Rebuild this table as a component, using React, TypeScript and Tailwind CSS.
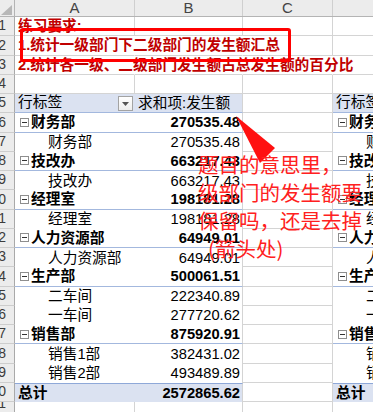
import React from "react";

type Kind = "head" | "dept" | "child" | "total";
type PRow = { kind: Kind; label: string; value: string };

const pivot: PRow[] = [
  { kind: "head", label: "行标签", value: "求和项:发生额" },
  { kind: "dept", label: "财务部", value: "270535.48" },
  { kind: "child", label: "财务部", value: "270535.48" },
  { kind: "dept", label: "技改办", value: "663217.43" },
  { kind: "child", label: "技改办", value: "663217.43" },
  { kind: "dept", label: "经理室", value: "198181.28" },
  { kind: "child", label: "经理室", value: "198181.28" },
  { kind: "dept", label: "人力资源部", value: "64949.01" },
  { kind: "child", label: "人力资源部", value: "64949.01" },
  { kind: "dept", label: "生产部", value: "500061.51" },
  { kind: "child", label: "二车间", value: "222340.89" },
  { kind: "child", label: "一车间", value: "277720.62" },
  { kind: "dept", label: "销售部", value: "875920.91" },
  { kind: "child", label: "销售1部", value: "382431.02" },
  { kind: "child", label: "销售2部", value: "493489.89" },
  { kind: "total", label: "总计", value: "2572865.62" },
];

const font = "font-['Liberation_Sans','Noto_Sans_CJK_SC',sans-serif]";

function RowNum({ n }: { n: number | string }) {
  return (
    <div className="flex w-[15px] shrink-0 items-end justify-end overflow-hidden border-r border-b border-r-[#a9a9a9] border-b-[#cdcdcd] bg-[#ececec] pr-[8px] pb-[1px] text-[14px] leading-[17px] text-[#3c3c3c]">
      {n}
    </div>
  );
}

function Collapse() {
  return (
    <span className="relative mr-[2px] inline-block h-[9px] w-[9px] shrink-0 border border-[#8e8e8e] bg-white">
      <span className="absolute top-[3px] left-[1px] h-px w-[5px] bg-[#333]" />
    </span>
  );
}

function Dropdown() {
  return (
    <span className="flex h-[15px] w-[15px] shrink-0 items-center justify-center border border-[#a3a3a3] bg-gradient-to-b from-white to-[#eeeeee]">
      <svg width="7" height="4" viewBox="0 0 7 4">
        <path d="M0 0h7L3.5 4z" fill="#555" />
      </svg>
    </span>
  );
}

function lineCls(kind: Kind) {
  if (kind === "head") return "bg-[#dbe2f1] border-b border-[#a3b8de]";
  if (kind === "dept") return "border-b border-[#a3b8de]";
  if (kind === "total") return "bg-[#dbe2f1] border-t border-[#8ea8d8]";
  return "";
}

function Label({ r }: { r: PRow }) {
  if (r.kind === "head")
    return (
      <div className="flex h-full items-end justify-between pr-[2px] pb-[1px] pl-[3px] whitespace-nowrap">
        <span className="shrink-0 leading-[18px]">{r.label}</span>
        <Dropdown />
      </div>
    );
  if (r.kind === "dept")
    return (
      <div className="flex h-full items-center pl-[5px] font-bold whitespace-nowrap">
        <Collapse />
        <span>{r.label}</span>
      </div>
    );
  if (r.kind === "total")
    return <div className="flex h-full items-center pl-[3px] font-bold">{r.label}</div>;
  return <div className="flex h-full items-center pl-[33px] whitespace-nowrap">{r.label}</div>;
}

function PivotRow({ r, n }: { r: PRow; n: number }) {
  return (
    <div className="flex h-[19.25px]">
      <RowNum n={n} />
      <div className={`w-[120px] shrink-0 ${lineCls(r.kind)}`}>
        <Label r={r} />
      </div>
      <div
        className={`flex w-[108px] shrink-0 items-center border-r border-r-[#d4d4d4] pr-[2px] ${
          r.kind === "head" ? "justify-start pl-[3px]" : "justify-end"
        } ${r.kind === "dept" || r.kind === "total" ? "font-bold" : ""} ${lineCls(r.kind)}`}
      >
        {r.value}
      </div>
      <div className="w-[90px] shrink-0 border-r border-b border-[#d4d4d4]" />
      <div className={`w-[120px] shrink-0 overflow-hidden ${lineCls(r.kind)}`}>
        <Label r={r} />
      </div>
    </div>
  );
}

function PlainRow({
  n,
  text,
  hide = [],
}: {
  n: number;
  text?: string;
  hide?: string[];
}) {
  const v = (c: string) => (hide.includes(c) ? "border-r-transparent" : "border-r-[#d4d4d4]");
  return (
    <div className="flex h-[19.25px]">
      <RowNum n={n} />
      <div className={`relative w-[120px] shrink-0 border-r border-b border-b-[#d4d4d4] ${v("a")}`}>
        {text && (
          <span className="absolute top-0 left-[3px] leading-[19px] font-bold whitespace-nowrap text-[#c00000]">
            {text}
          </span>
        )}
      </div>
      <div className={`w-[108px] shrink-0 border-r border-b border-b-[#d4d4d4] ${v("b")}`} />
      <div className={`w-[90px] shrink-0 border-r border-b border-b-[#d4d4d4] ${v("c")}`} />
      <div className="w-[120px] shrink-0 border-b border-[#d4d4d4]" />
    </div>
  );
}

export default function App() {
  return (
    <div className={`relative h-[412px] w-[373px] overflow-hidden bg-white text-[14.7px] text-black ${font}`}>
      {/* column headers */}
      <div className="flex h-[17px] border-b border-[#b4b4b4] bg-[#ececec] text-[15px] leading-[16px] text-[#444]">
        <div className="relative w-[15px] shrink-0 border-r border-[#b4b4b4]">
          <svg className="absolute right-[2px] bottom-[1px]" width="11" height="10" viewBox="0 0 11 10">
            <path d="M11 0V10H0z" fill="#b7b7b7" />
          </svg>
        </div>
        <div className="w-[120px] shrink-0 border-r border-[#cfcfcf] text-center">A</div>
        <div className="w-[108px] shrink-0 border-r border-[#cfcfcf] text-center">B</div>
        <div className="w-[90px] shrink-0 border-r border-[#cfcfcf] text-center">C</div>
        <div className="w-[120px] shrink-0" />
      </div>

      <PlainRow n={1} text="练习要求:" />
      <PlainRow n={2} text="1.统计一级部门下二级部门的发生额汇总" hide={["a", "b"]} />
      <PlainRow n={3} text="2.统计各一级、二级部门发生额占总发生额的百分比" hide={["a", "b", "c"]} />
      <PlainRow n={4} />
      {pivot.map((r, i) => (
        <PivotRow key={i} r={r} n={i + 5} />
      ))}
      <div className="flex h-[12px]">
        <RowNum n={21} />
        <div className="w-[120px] shrink-0 border-r border-[#d4d4d4]" />
        <div className="w-[108px] shrink-0 border-r border-[#d4d4d4]" />
        <div className="w-[90px] shrink-0 border-r border-[#d4d4d4]" />
      </div>

      {/* annotations */}
      <div className="pointer-events-none absolute top-[28px] left-[20px] h-[34px] w-[271px] rounded-[3px] border-[3px] border-[#ff0000]" />

      <svg className="pointer-events-none absolute top-0 left-0" width="373" height="412" viewBox="0 0 373 412">
        <path d="M236 116 L275 148 L260 163 Z" fill="#ff1010" />
      </svg>

      <div className="pointer-events-none absolute top-[150px] left-[198px] font-['Noto_Sans_CJK_SC',sans-serif] text-[20.5px] leading-[28px] whitespace-nowrap text-[#ff2020]">
        <div>题目的意思里，</div>
        <div>级部门的发生额要</div>
        <div>保留吗，还是去掉</div>
        <div className="pl-[10px]">(箭头处)</div>
      </div>
    </div>
  );
}
